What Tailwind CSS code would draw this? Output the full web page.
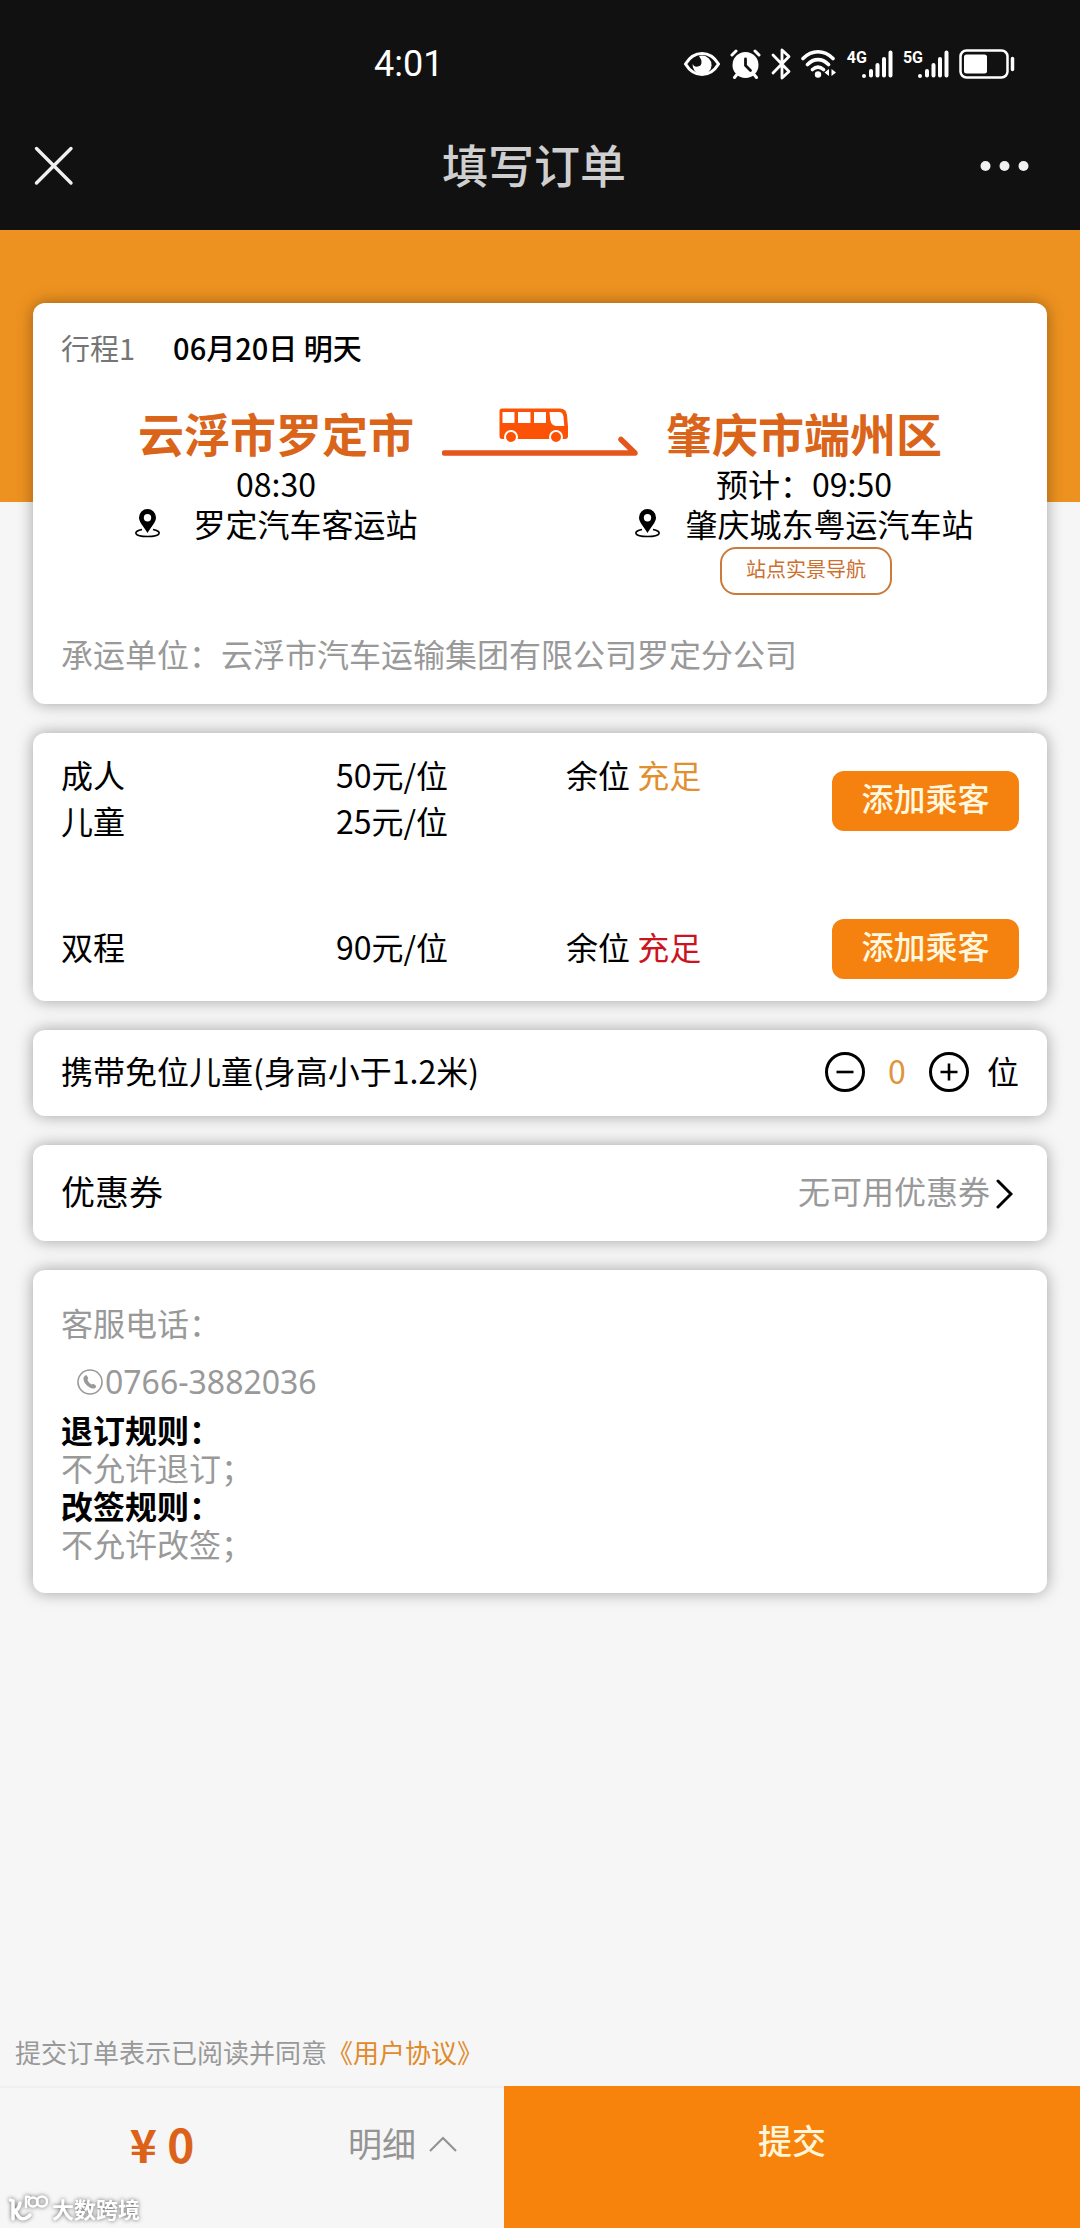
<!DOCTYPE html>
<html lang="zh-CN">
<head>
<meta charset="utf-8">
<meta name="viewport" content="width=device-width, initial-scale=1">
<title>填写订单</title>
<script src="https://cdn.jsdelivr.net/npm/@tailwindcss/browser@4"></script>
</head>
<body class="relative flex min-h-screen flex-col bg-[#f6f6f6] font-['Noto_Sans_CJK_SC',sans-serif] text-[32px] leading-10 text-black">

<header class="bg-[#111111]">
  <!-- status bar -->
  <div class="flex h-32 items-center justify-between pr-[65px] pl-[374px] text-white">
    <time class="font-['Roboto','Noto_Sans_CJK_SC',sans-serif] text-[36px]">4:01</time>
    <div class="flex items-center gap-[10px]">
      <svg class="h-8 w-9" viewBox="0 0 36 32" fill="none">
        <path d="M1.500 16C6 8.500 12 5.500 18 5.500S30 8.500 34.500 16C30 23.500 24 26.500 18 26.500S6 23.500 1.500 16Z" stroke="#fff" stroke-width="3"/>
        <path d="M18 7.500a9.500 9.500 0 1 1-9.300 8a4.500 4.500 0 0 0 8.800-1.500c0-2.500-1-4-2.500-5.500q1.500-1 3-1Z" fill="#fff"/>
      </svg>
      <svg class="h-8 w-[31px]" viewBox="0 0 31 32" fill="none" stroke-linecap="round">
        <circle cx="15.500" cy="17" r="13" fill="#fff"/>
        <path d="M2 7l4-4M29 7l-4-4M6.500 27l-2 2.500M24.500 27l2 2.500" stroke="#fff" stroke-width="3"/>
        <path d="M15.500 11v6.500l5 5" stroke="#111" stroke-width="2.800"/>
      </svg>
      <svg class="h-8 w-5" viewBox="0 0 20 32" fill="none" stroke="#fff" stroke-width="2.800" stroke-linejoin="round" stroke-linecap="round">
        <path d="M2 7L18 23.500L11 30V2L18 8.500L2 25"/>
      </svg>
      <svg class="h-8 w-9" viewBox="0 0 36 32" fill="none" stroke="#fff" stroke-width="3.600" stroke-linecap="round">
        <path d="M2 10.500C11 1.500 23 1.500 32 10.500M6.500 16.500C13 10 21 10 27.500 16.500M11.500 21.500C15 18.500 19 18.500 22.500 21.500"/>
        <circle cx="17" cy="26.500" r="3.200" fill="#fff" stroke="none"/>
        <path d="M28 21v7l-4.500-3.500zM30.500 21v7l4.500-3.500z" fill="#fff" stroke="none"/>
      </svg>
      <div class="flex h-8 items-start">
        <span class="font-['Roboto',sans-serif] text-[16px] leading-5 font-bold">4G</span>
        <svg class="-ml-1.5 h-8 w-8" viewBox="0 0 32 32" stroke="#fff" stroke-width="4" stroke-linecap="round">
          <path d="M3 28v0M10 27.500V23M16.500 27.500V17M23 27.500V11M29.500 27.500V4.500"/>
        </svg>
      </div>
      <div class="flex h-8 items-start">
        <span class="font-['Roboto',sans-serif] text-[16px] leading-5 font-bold">5G</span>
        <svg class="-ml-1.5 h-8 w-8" viewBox="0 0 32 32" stroke="#fff" stroke-width="4" stroke-linecap="round">
          <path d="M3 28v0M10 27.500V23M16.500 27.500V17M23 27.500V11M29.500 27.500V4.500"/>
        </svg>
      </div>
      <svg class="h-8 w-14" viewBox="0 0 56 32" fill="none">
        <rect x="1.500" y="2.500" width="47" height="27" rx="6" stroke="#fff" stroke-width="2.500"/>
        <rect x="5" y="6.500" width="23" height="19" rx="2.500" fill="#fff"/>
        <path d="M53.500 10.500v11" stroke="#fff" stroke-width="3.500" stroke-linecap="round"/>
      </svg>
    </div>
  </div>
  <!-- title bar -->
  <div class="grid grid-cols-[1fr_auto_1fr] items-center pt-1.5 pr-[46px] pb-8 pl-[34px]">
    <button type="button" aria-label="关闭">
      <svg class="size-10" viewBox="0 0 40 40" stroke="#f0f0f0" stroke-width="3.400" stroke-linecap="round"><path d="M2.500 2.500L37 37M37 2.500L2.500 37"/></svg>
    </button>
    <h1 class="pb-1.5 text-[46px] leading-[58px] font-medium text-[#cfcfcf]">填写订单</h1>
    <button type="button" class="justify-self-end" aria-label="更多">
      <svg class="h-10 w-[54px]" viewBox="0 0 54 40" fill="#f0f0f0"><circle cx="5.500" cy="20" r="5"/><circle cx="24.500" cy="20" r="5"/><circle cx="43.500" cy="20" r="5"/></svg>
    </button>
  </div>
</header>

<main class="relative flex flex-col gap-[29px] px-[33px] pt-[73px]">
  <div class="absolute inset-x-0 top-0 h-[272px] bg-[#ed9220]"></div>

  <section class="relative rounded-xl bg-white px-7 pt-6 pb-[31px] shadow-[0_0_16px_rgba(0,0,0,0.35)]">
    <p class="flex gap-[38px] text-[29px]"><span class="text-[#757575]">行程1</span><span class="font-medium">06月20日 明天</span></p>
    <div class="mt-10 flex items-center justify-center gap-7 text-[46px] leading-[50px] font-bold text-[#d9641a]">
      <h2 class="pb-1.5">云浮市罗定市</h2>
      <svg class="h-14 w-[196px]" viewBox="0 0 196 56" fill="none">
        <path d="M2.500 46H193L179 32.500" stroke="#e4561b" stroke-width="5.500" stroke-linecap="round" stroke-linejoin="round"/>
        <path d="M60 1.500H118Q124 1.500 125 8L126 20V29Q126 32 123 32H60Q57.500 32 57.500 29V4Q57.500 1.500 60 1.500Z" fill="#fb5205"/>
        <path d="M60.500 5h12v11h-12zM76 5h12.500v11h-12.500zM92 5h12v11h-12zM107.500 5h9.500q4 0 4.500 5l.8 9h-8.500q-5-1-5.500-6z" fill="#fff"/>
        <g fill="#fb5205" stroke="#fff" stroke-width="2"><circle cx="69" cy="30" r="6"/><circle cx="114" cy="30" r="6"/></g>
      </svg>
      <h2 class="pb-1.5">肇庆市端州区</h2>
    </div>
    <div class="grid grid-cols-2 gap-x-[98px]">
      <div class="flex flex-col items-center">
        <time>08:30</time>
        <p class="flex items-center gap-8">
          <svg class="h-[30px] w-[27px]" viewBox="0 0 27 30" fill="none"><path d="M13.500 1a8.500 8.500 0 0 1 8.500 8.500c0 5-5.500 10-8.500 15.500c-3-5.500-8.500-10.500-8.500-15.500a8.500 8.500 0 0 1 8.500-8.500zm0 5a3.700 3.700 0 1 0 0 7.400a3.700 3.700 0 1 0 0-7.400z" fill="#000" fill-rule="evenodd"/><path d="M8 21.500C-1 23-1 28.500 13.500 28.500S28 23 19 21.500" stroke="#000" stroke-width="1.600"/></svg>
          罗定汽车客运站
        </p>
      </div>
      <div class="flex flex-col items-center">
        <p>预计：<time>09:50</time></p>
        <p class="flex items-center gap-6">
          <svg class="h-[30px] w-[27px]" viewBox="0 0 27 30" fill="none"><path d="M13.500 1a8.500 8.500 0 0 1 8.500 8.500c0 5-5.500 10-8.500 15.500c-3-5.500-8.500-10.500-8.500-15.500a8.500 8.500 0 0 1 8.500-8.500zm0 5a3.700 3.700 0 1 0 0 7.400a3.700 3.700 0 1 0 0-7.400z" fill="#000" fill-rule="evenodd"/><path d="M8 21.500C-1 23-1 28.500 13.500 28.500S28 23 19 21.500" stroke="#000" stroke-width="1.600"/></svg>
          肇庆城东粤运汽车站
        </p>
        <button type="button" class="mt-1 ml-1 rounded-2xl border-2 border-[#cb7a3c] px-6 pt-1 pb-2 text-[20px] leading-8 text-[#cc7030]">站点实景导航</button>
      </div>
    </div>
    <p class="mt-[38px] text-[#999999]">承运单位：云浮市汽车运输集团有限公司罗定分公司</p>
  </section>

  <section class="relative rounded-xl bg-white px-7 pt-[18px] pb-[22px] shadow-[0_0_16px_rgba(0,0,0,0.35)]">
    <div class="grid grid-cols-[275fr_230fr_266fr_187px] items-start">
      <p class="leading-[46px]">成人<br>儿童</p>
      <p class="leading-[46px]">50元/位<br>25元/位</p>
      <p class="leading-[46px]">余位 <span class="text-[#e0902f]">充足</span></p>
      <button type="button" class="mt-2 self-center rounded-xl bg-[#f5820e] pt-1.5 pb-3.5 font-medium text-[#fff8e0]">添加乘客</button>
    </div>
    <div class="mt-[76px] grid grid-cols-[275fr_230fr_266fr_187px] items-center">
      <p class="pb-1.5">双程</p>
      <p class="pb-1.5">90元/位</p>
      <p class="pb-1.5">余位 <span class="text-[#cc1420]">充足</span></p>
      <button type="button" class="rounded-xl bg-[#f5820e] pt-1.5 pb-3.5 font-medium text-[#fff8e0]">添加乘客</button>
    </div>
  </section>

  <section class="relative flex items-center justify-between rounded-xl bg-white px-7 pt-5 pb-[22px] shadow-[0_0_16px_rgba(0,0,0,0.35)]">
    <p class="pb-1">携带免位儿童(身高小于1.2米)</p>
    <div class="flex items-center">
      <button type="button" aria-label="减少"><svg class="size-10" viewBox="0 0 40 40" fill="none" stroke="#000"><circle cx="20" cy="20" r="18.500" stroke-width="3"/><path d="M11.500 20h17" stroke-width="2.600"/></svg></button>
      <output class="w-16 pb-1 text-center text-[#dd9440]">0</output>
      <button type="button" aria-label="增加"><svg class="size-10" viewBox="0 0 40 40" fill="none" stroke="#000"><circle cx="20" cy="20" r="18.500" stroke-width="3"/><path d="M11.500 20h17M20 11.500v17" stroke-width="2.600"/></svg></button>
      <span class="pb-1 pl-[18px]">位</span>
    </div>
  </section>

  <section class="relative flex items-center justify-between rounded-xl bg-white py-[25px] pr-[34px] pl-7 shadow-[0_0_16px_rgba(0,0,0,0.35)]">
    <h2 class="pb-1 text-[34px]">优惠券</h2>
    <a href="#" class="flex items-center gap-1.5 text-[#999999]"><span class="pb-1.5">无可用优惠券</span>
      <svg class="h-8 w-[17px]" viewBox="0 0 17 32" fill="none" stroke="#000" stroke-width="3" stroke-linecap="round"><path d="M2 4L15 17L2 30"/></svg>
    </a>
  </section>

  <section class="relative rounded-xl bg-white px-7 pt-[33px] pb-[31px] leading-[38px] text-[#999999] shadow-[0_0_16px_rgba(0,0,0,0.35)]">
    <p>客服电话：</p>
    <a href="tel:0766-3882036" class="mt-[22px] mb-[9px] flex items-center gap-0.5 pl-4 font-['Noto_Sans',sans-serif]">
      <svg class="size-[26px]" viewBox="0 0 26 26" fill="none"><circle cx="13" cy="13" r="12" stroke="#999" stroke-width="1.600"/><path d="M8 6.500q1.500-.8 2.300.7l.8 1.800q.3 1-.8 1.800q1.200 3.200 4.500 4.800q1-1 2-.5l1.900 1.300q1.200 1.200-.2 2.300q-2.500 2-6.500-.7q-4.500-3-5.500-7.200q-.5-3 1.500-4.300z" fill="#999"/></svg>
      0766-3882036
    </a>
    <h3 class="font-bold text-black">退订规则：</h3>
    <p>不允许退订；</p>
    <h3 class="font-bold text-black">改签规则：</h3>
    <p>不允许改签；</p>
  </section>
</main>

<footer class="mt-auto">
  <p class="px-[15px] pb-[14px] text-[26px] text-[#999999]">提交订单表示已阅读并同意<a href="#" class="text-[#e08a2a]">《用户协议》</a></p>
  <div class="grid grid-cols-[504fr_576fr]">
    <div class="grid grid-cols-[324fr_180fr] items-center border-t-2 border-[#f0f0f0] pb-[30px]">
      <strong class="text-center text-[46px] leading-14 font-bold text-[#dc621a]">¥ 0</strong>
      <button type="button" class="flex items-center gap-3 pl-6 text-[34px] text-[#949494]">明细
        <svg class="h-5 w-[30px]" viewBox="0 0 30 20" fill="none" stroke="#949494" stroke-width="2.200"><path d="M2 18L15 5L28 18"/></svg>
      </button>
    </div>
    <button type="submit" class="bg-[#f7830c] pt-[34px] pb-[68px] text-[34px] font-medium text-[#fff6da]">提交</button>
  </div>
</footer>

<!-- watermark -->
<div class="absolute bottom-1 left-2 flex items-center gap-1 text-[22px] leading-8 font-bold text-white drop-shadow-[0_0_2px_rgba(0,0,0,0.6)]">
  <svg class="h-8 w-10" viewBox="0 0 40 32" fill="none" stroke="#fff" stroke-linecap="round"><path d="M2.500 8L5 9V27M6 19Q11 18 12 11M8 20Q13 32 22 23" stroke-width="3.500"/><path d="M18 15V5Q18 4 21 5" stroke-width="2.500"/><circle cx="25" cy="10" r="4.500" stroke-width="2.500"/><circle cx="34" cy="9.500" r="5" stroke-width="2.500"/></svg>
  大数跨境
</div>
</body>
</html>
